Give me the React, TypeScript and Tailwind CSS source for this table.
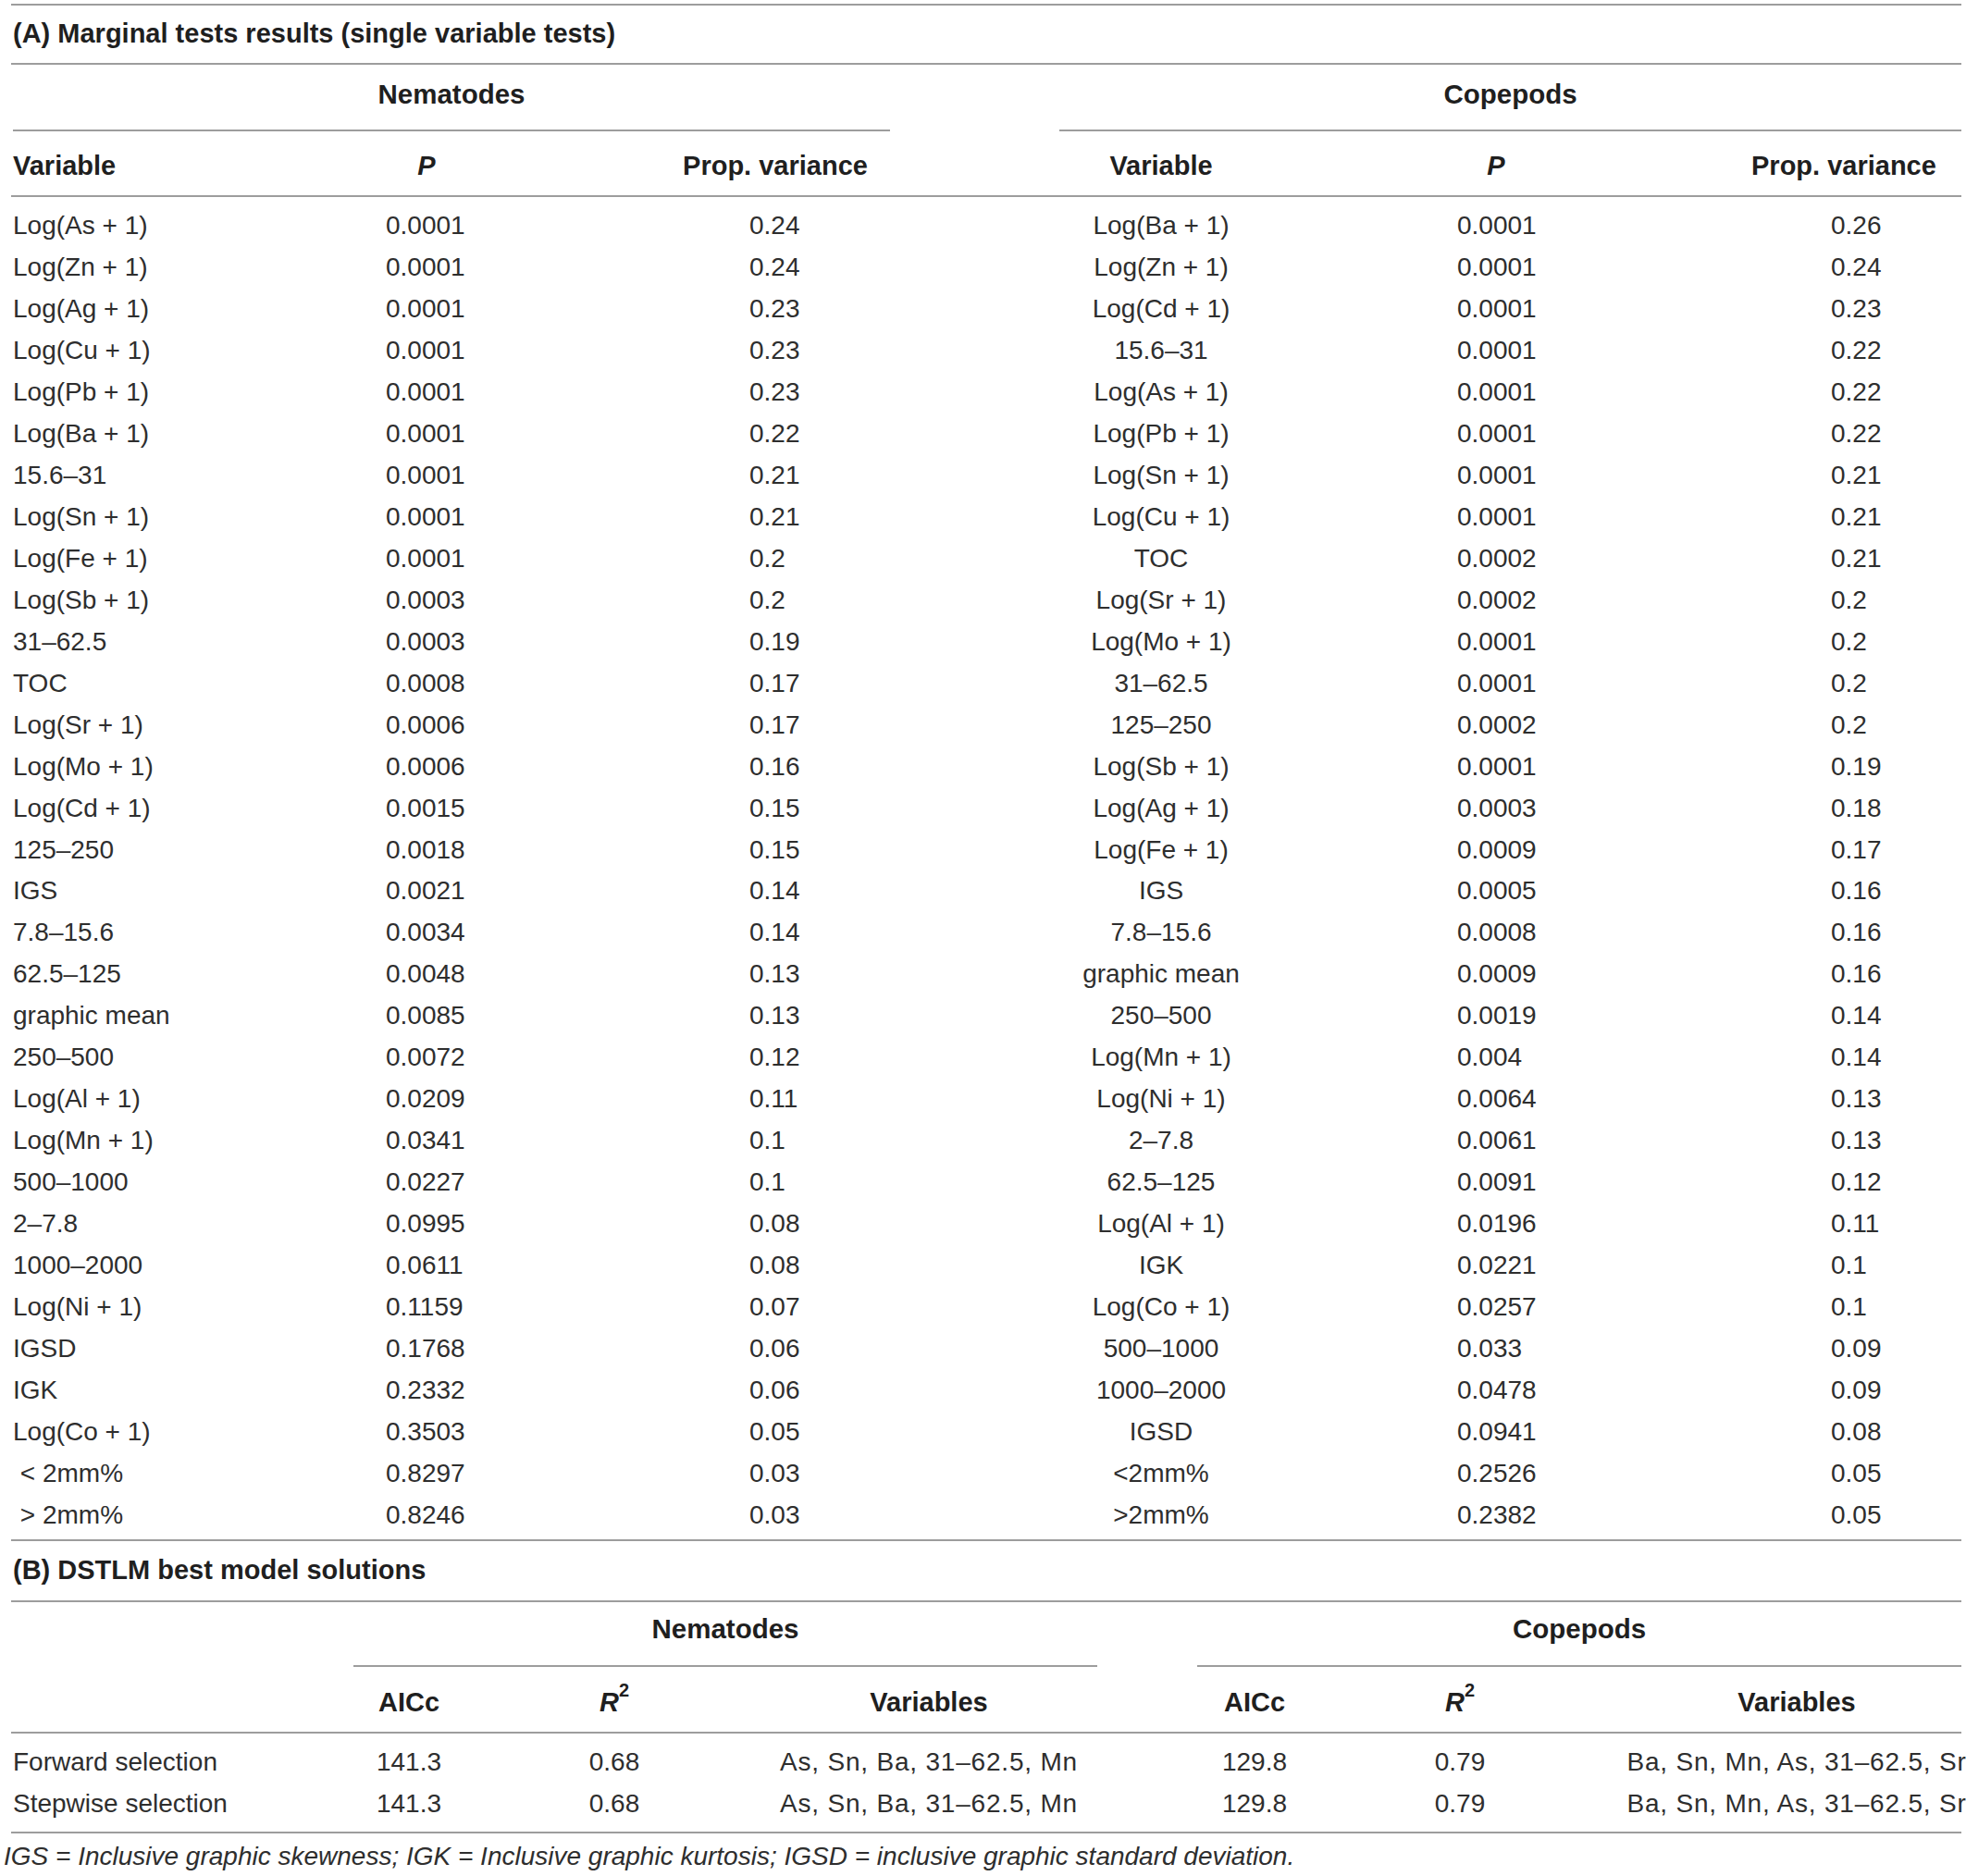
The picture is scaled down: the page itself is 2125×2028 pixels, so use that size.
interface MarginalRow {
  variable: string;
  p: string;
  prop: string;
}

interface ModelRow {
  label: string;
  nemAicc: string;
  nemR2: string;
  nemVars: string;
  copAicc: string;
  copR2: string;
  copVars: string;
}

const nematodes: MarginalRow[] = [
  { variable: 'Log(As + 1)', p: '0.0001', prop: '0.24' },
  { variable: 'Log(Zn + 1)', p: '0.0001', prop: '0.24' },
  { variable: 'Log(Ag + 1)', p: '0.0001', prop: '0.23' },
  { variable: 'Log(Cu + 1)', p: '0.0001', prop: '0.23' },
  { variable: 'Log(Pb + 1)', p: '0.0001', prop: '0.23' },
  { variable: 'Log(Ba + 1)', p: '0.0001', prop: '0.22' },
  { variable: '15.6–31', p: '0.0001', prop: '0.21' },
  { variable: 'Log(Sn + 1)', p: '0.0001', prop: '0.21' },
  { variable: 'Log(Fe + 1)', p: '0.0001', prop: '0.2' },
  { variable: 'Log(Sb + 1)', p: '0.0003', prop: '0.2' },
  { variable: '31–62.5', p: '0.0003', prop: '0.19' },
  { variable: 'TOC', p: '0.0008', prop: '0.17' },
  { variable: 'Log(Sr + 1)', p: '0.0006', prop: '0.17' },
  { variable: 'Log(Mo + 1)', p: '0.0006', prop: '0.16' },
  { variable: 'Log(Cd + 1)', p: '0.0015', prop: '0.15' },
  { variable: '125–250', p: '0.0018', prop: '0.15' },
  { variable: 'IGS', p: '0.0021', prop: '0.14' },
  { variable: '7.8–15.6', p: '0.0034', prop: '0.14' },
  { variable: '62.5–125', p: '0.0048', prop: '0.13' },
  { variable: 'graphic mean', p: '0.0085', prop: '0.13' },
  { variable: '250–500', p: '0.0072', prop: '0.12' },
  { variable: 'Log(Al + 1)', p: '0.0209', prop: '0.11' },
  { variable: 'Log(Mn + 1)', p: '0.0341', prop: '0.1' },
  { variable: '500–1000', p: '0.0227', prop: '0.1' },
  { variable: '2–7.8', p: '0.0995', prop: '0.08' },
  { variable: '1000–2000', p: '0.0611', prop: '0.08' },
  { variable: 'Log(Ni + 1)', p: '0.1159', prop: '0.07' },
  { variable: 'IGSD', p: '0.1768', prop: '0.06' },
  { variable: 'IGK', p: '0.2332', prop: '0.06' },
  { variable: 'Log(Co + 1)', p: '0.3503', prop: '0.05' },
  { variable: '\u00a0< 2mm%', p: '0.8297', prop: '0.03' },
  { variable: '\u00a0> 2mm%', p: '0.8246', prop: '0.03' },
];

const copepods: MarginalRow[] = [
  { variable: 'Log(Ba + 1)', p: '0.0001', prop: '0.26' },
  { variable: 'Log(Zn + 1)', p: '0.0001', prop: '0.24' },
  { variable: 'Log(Cd + 1)', p: '0.0001', prop: '0.23' },
  { variable: '15.6–31', p: '0.0001', prop: '0.22' },
  { variable: 'Log(As + 1)', p: '0.0001', prop: '0.22' },
  { variable: 'Log(Pb + 1)', p: '0.0001', prop: '0.22' },
  { variable: 'Log(Sn + 1)', p: '0.0001', prop: '0.21' },
  { variable: 'Log(Cu + 1)', p: '0.0001', prop: '0.21' },
  { variable: 'TOC', p: '0.0002', prop: '0.21' },
  { variable: 'Log(Sr + 1)', p: '0.0002', prop: '0.2' },
  { variable: 'Log(Mo + 1)', p: '0.0001', prop: '0.2' },
  { variable: '31–62.5', p: '0.0001', prop: '0.2' },
  { variable: '125–250', p: '0.0002', prop: '0.2' },
  { variable: 'Log(Sb + 1)', p: '0.0001', prop: '0.19' },
  { variable: 'Log(Ag + 1)', p: '0.0003', prop: '0.18' },
  { variable: 'Log(Fe + 1)', p: '0.0009', prop: '0.17' },
  { variable: 'IGS', p: '0.0005', prop: '0.16' },
  { variable: '7.8–15.6', p: '0.0008', prop: '0.16' },
  { variable: 'graphic mean', p: '0.0009', prop: '0.16' },
  { variable: '250–500', p: '0.0019', prop: '0.14' },
  { variable: 'Log(Mn + 1)', p: '0.004', prop: '0.14' },
  { variable: 'Log(Ni + 1)', p: '0.0064', prop: '0.13' },
  { variable: '2–7.8', p: '0.0061', prop: '0.13' },
  { variable: '62.5–125', p: '0.0091', prop: '0.12' },
  { variable: 'Log(Al + 1)', p: '0.0196', prop: '0.11' },
  { variable: 'IGK', p: '0.0221', prop: '0.1' },
  { variable: 'Log(Co + 1)', p: '0.0257', prop: '0.1' },
  { variable: '500–1000', p: '0.033', prop: '0.09' },
  { variable: '1000–2000', p: '0.0478', prop: '0.09' },
  { variable: 'IGSD', p: '0.0941', prop: '0.08' },
  { variable: '<2mm%', p: '0.2526', prop: '0.05' },
  { variable: '>2mm%', p: '0.2382', prop: '0.05' },
];

const models: ModelRow[] = [
  {
    label: 'Forward selection',
    nemAicc: '141.3',
    nemR2: '0.68',
    nemVars: 'As, Sn, Ba, 31–62.5, Mn',
    copAicc: '129.8',
    copR2: '0.79',
    copVars: 'Ba, Sn, Mn, As, 31–62.5, Sr',
  },
  {
    label: 'Stepwise selection',
    nemAicc: '141.3',
    nemR2: '0.68',
    nemVars: 'As, Sn, Ba, 31–62.5, Mn',
    copAicc: '129.8',
    copR2: '0.79',
    copVars: 'Ba, Sn, Mn, As, 31–62.5, Sr',
  },
];

const Rule = () => <div className="h-[2px] bg-[#9d9d9d]" />;

const gridA = 'grid grid-cols-[288px_322px_432px_402px_322px_342px]';
const gridB = 'grid grid-cols-[370px_120px_324px_356px_348px_96px_632px] w-max';

const R2 = () => (
  <span className="font-bold">
    <span className="italic">R</span>
    <sup className="text-[20px] -top-[0.8em]">2</sup>
  </span>
);

export default function App() {
  return (
    <div className="w-[2125px] h-[2028px] overflow-hidden bg-white font-['Liberation_Sans',Arial,sans-serif] text-[28px] text-[#2e2e2e]">
      <div className="pl-[12px] w-[2120px]">
        <div className="h-[4px]" />
        <Rule />

        {/* (A) */}
        <div className="h-[62px] flex items-center pl-[2px] font-bold text-[29px] text-[#1f1f1f]">
          (A) Marginal tests results (single variable tests)
        </div>
        <Rule />

        <div className="flex">
          <div className="ml-[2px] w-[948px]">
            <div className="h-[64px] flex items-center justify-center font-bold text-[29.5px] text-[#1f1f1f]">Nematodes</div>
            <div className="h-[6px]" />
            <Rule />
          </div>
          <div className="ml-[183px] flex-1">
            <div className="h-[64px] flex items-center justify-center font-bold text-[29.5px] text-[#1f1f1f]">Copepods</div>
            <div className="h-[6px]" />
            <Rule />
          </div>
        </div>

        <div className={`${gridA} pt-[15px] pb-[9px] h-[69px] items-center font-bold text-[29px] text-[#1f1f1f]`}>
          <div className="pl-[2px]">Variable</div>
          <div className="text-center italic">P</div>
          <div className="text-center">Prop. variance</div>
          <div className="text-center">Variable</div>
          <div className="text-center italic">P</div>
          <div className="pl-[115px]">Prop. variance</div>
        </div>
        <Rule />

        <div className="pt-[9px] pb-[4px]">
          {nematodes.map((row, i) => {
            const cop = copepods[i];
            return (
              <div key={i} className={`${gridA} h-[44.95px] items-center whitespace-pre`}>
                <div className="pl-[2px]">{row.variable}</div>
                <div className="pl-[117px]">{row.p}</div>
                <div className="pl-[188px]">{row.prop}</div>
                <div className="text-center">{cop.variable}</div>
                <div className="pl-[119px]">{cop.p}</div>
                <div className="pl-[201px]">{cop.prop}</div>
              </div>
            );
          })}
        </div>
        <Rule />

        {/* (B) */}
        <div className="h-[64px] flex items-center pl-[2px] font-bold text-[29px] text-[#1f1f1f]">
          (B) DSTLM best model solutions
        </div>
        <Rule />

        <div className="flex">
          <div className="ml-[370px] w-[804px]">
            <div className="h-[58px] flex items-center justify-center font-bold text-[29.5px] text-[#1f1f1f]">Nematodes</div>
            <div className="h-[10px]" />
            <Rule />
          </div>
          <div className="ml-[108px] flex-1">
            <div className="h-[58px] flex items-center justify-center font-bold text-[29.5px] text-[#1f1f1f]">Copepods</div>
            <div className="h-[10px]" />
            <Rule />
          </div>
        </div>

        <div className={`${gridB} pt-[16px] pb-[9px] h-[70px] items-center font-bold text-[29px] text-[#1f1f1f]`}>
          <div />
          <div className="text-center">AICc</div>
          <div className="text-center"><R2 /></div>
          <div className="text-center">Variables</div>
          <div className="text-center">AICc</div>
          <div className="text-center"><R2 /></div>
          <div className="text-center">Variables</div>
        </div>
        <Rule />

        <div className="py-[8px]">
          {models.map((m) => (
            <div key={m.label} className={`${gridB} h-[45px] items-center`}>
              <div className="pl-[2px]">{m.label}</div>
              <div className="text-center">{m.nemAicc}</div>
              <div className="text-center">{m.nemR2}</div>
              <div className="text-center tracking-[0.8px]">{m.nemVars}</div>
              <div className="text-center">{m.copAicc}</div>
              <div className="text-center">{m.copR2}</div>
              <div className="text-center tracking-[0.8px]">{m.copVars}</div>
            </div>
          ))}
        </div>
        <Rule />
      </div>

      <div className="h-[47px] pt-[3px] flex items-center pl-[4px] italic">
        IGS = Inclusive graphic skewness; IGK = Inclusive graphic kurtosis; IGSD = inclusive graphic standard deviation.
      </div>
    </div>
  );
}
